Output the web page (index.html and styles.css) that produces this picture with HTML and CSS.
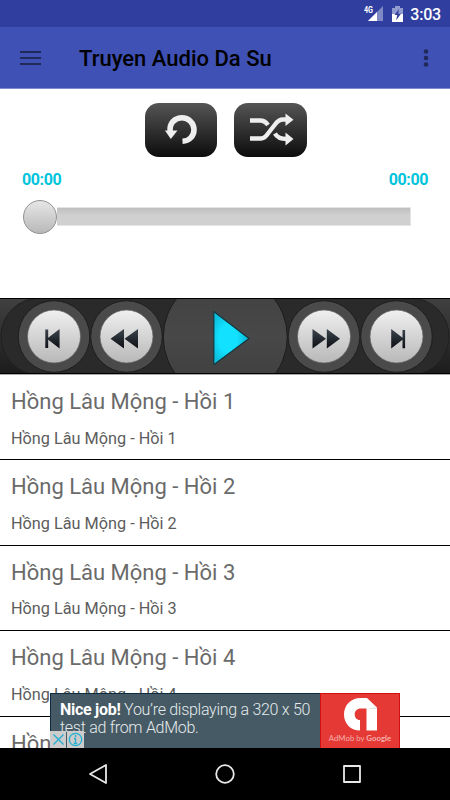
FILE: index.html
```html
<!DOCTYPE html>
<html lang="vi">
<head>
    <meta charset="UTF-8">
    <title>Truyen Audio Da Su</title>
    <link rel="stylesheet" href="styles.css">
</head>
<body>
    <div class="screen">
        <div class="statusbar">
            <svg class="signal" width="20" height="18" viewBox="0 0 20 18">
                <path d="M19 1v15H4z" fill="#7f89c6"/>
                <path d="M13 7v9H4z" fill="#fff"/>
                <text x="0" y="8" class="network" textLength="9" lengthAdjust="spacingAndGlyphs">4G</text>
            </svg>
            <svg class="battery" width="11" height="16" viewBox="0 0 11 16">
                <path d="M3 0h5v2h3v6H0V2h3z" fill="#929bd0"/>
                <path d="M0 8h11v8H0z" fill="#fff"/>
                <path d="M7 3L2.500 9h2.700l-1 5.200L9 7.800H6.200z" fill="#303f9f"/>
            </svg>
            <span class="clock">3:03</span>
        </div>

        <div class="toolbar">
            <svg class="menu" width="21" height="16" viewBox="0 0 21 16">
                <path d="M0 2h21M0 8h21M0 14h21" stroke="#202958" stroke-width="2"/>
            </svg>
            <h1>Truyen Audio Da Su</h1>
            <svg class="more" width="6" height="18" viewBox="0 0 6 18">
                <g fill="#202958"><circle cx="3" cy="2.500" r="2.300"/><circle cx="3" cy="9" r="2.300"/><circle cx="3" cy="15.500" r="2.300"/></g>
            </svg>
        </div>

        <div class="modes">
            <div class="mode">
                <svg width="72" height="54" viewBox="0 0 72 54">
                    <path d="M25.200 28.500C24 20 30 14.800 37 14.800c6.500 0 12 5 12 12 0 6.500-5 11.200-11.500 11.500" fill="none" stroke="#eee" stroke-width="5.600"/>
                    <path d="M20 27.500h12.500L25.800 36z" fill="#eee"/>
                </svg>
            </div>
            <div class="mode">
                <svg width="73" height="54" viewBox="0 0 73 54">
                    <g fill="none" stroke="#eee" stroke-width="4.300">
                        <path d="M16 35.500h11c3 0 5-2 7-5l7-9c2.500-3.500 4.500-5 8-5h4"/>
                        <path d="M16 17.500h10c4 0 6 1.500 8 4.500M41 30.500c2 4 5 5.500 12 5.500"/>
                    </g>
                    <path d="M51.500 10.500l8 6.300-8 6.200zM51.500 29.500l8 6.500-8 6.500z" fill="#eee"/>
                </svg>
            </div>
        </div>

        <div class="times">
            <span>00:00</span>
            <span>00:00</span>
        </div>

        <div class="seek">
            <div class="thumb"></div>
            <div class="track"></div>
        </div>

        <svg class="player" width="450" height="77" viewBox="0 0 450 77">
            <defs>
                <linearGradient id="edge" x1="0" y1="0" x2="0" y2="1">
                    <stop offset="0" stop-color="#414141"/><stop offset="1" stop-color="#1b1b1b"/>
                </linearGradient>
                <linearGradient id="mid" x1="0" y1="0" x2="0" y2="1">
                    <stop offset="0" stop-color="#404040"/><stop offset=".5" stop-color="#484848"/><stop offset="1" stop-color="#3c3c3c"/>
                </linearGradient>
                <linearGradient id="knob" x1="0" y1="0" x2="0" y2="1">
                    <stop offset="0" stop-color="#f0f0f0"/><stop offset="1" stop-color="#b8b8b8"/>
                </linearGradient>
                <linearGradient id="glyph" x1="0" y1="0" x2="0" y2="1">
                    <stop offset="0" stop-color="#3c444e"/><stop offset="1" stop-color="#0c0f13"/>
                </linearGradient>
                <radialGradient id="play" cx=".4">
                    <stop offset=".5" stop-color="#12e2ff"/><stop offset="1" stop-color="#0cc0de"/>
                </radialGradient>
            </defs>
            <rect width="450" height="77" fill="url(#edge)"/>
            <rect x="1" y="0" width="448" height="77" rx="38.500" fill="#2a2a2a" stroke="#202020"/>
            <circle cx="225.300" cy="39" r="62" fill="url(#mid)" stroke="#1c1c1c"/>
            <g fill="#4a4a4a" stroke="#1e1e1e">
                <circle cx="54" cy="38.500" r="35.800"/>
                <circle cx="126.500" cy="38.500" r="35.800"/>
                <circle cx="324" cy="38.500" r="35.800"/>
                <circle cx="396.500" cy="38.500" r="35.800"/>
            </g>
            <g fill="url(#knob)" stroke="#626262" stroke-width=".7">
                <circle cx="54" cy="38.500" r="26.500"/>
                <circle cx="126.500" cy="38.500" r="26.500"/>
                <circle cx="324" cy="38.500" r="26.500"/>
                <circle cx="396.500" cy="38.500" r="26.500"/>
            </g>
            <g fill="url(#glyph)">
                <path d="M45.300 31.500h2.900v8.200L59.600 31v19.500L48.200 41.800V50h-2.900z"/>
                <path d="M110.500 40.700L124 31v19.500zM124.500 40.700L138 31v19.500z"/>
                <path d="M312.500 31L326 40.700l-13.500 9.800zM326.800 31l13.200 9.700-13.200 9.800z"/>
                <path d="M391.200 31l11.300 8.700V32h2.600v18.200h-2.600v-8.500l-11.300 8.800z"/>
            </g>
            <path d="M213.800 13.500L249 40.500l-35.200 26.200z" fill="url(#play)" stroke="#17363f" stroke-width="1.200" stroke-linejoin="round"/>
            <path d="M0 .5h450M0 75.500h450" stroke="#000"/>
            <path d="M0 76.500h450" stroke="#aaa"/>
        </svg>

        <div class="content">
            <ul class="list">
                <li><div class="title">Hồng Lâu Mộng - Hồi 1</div><div class="subtitle">Hồng Lâu Mộng - Hồi 1</div></li>
                <li><div class="title">Hồng Lâu Mộng - Hồi 2</div><div class="subtitle">Hồng Lâu Mộng - Hồi 2</div></li>
                <li><div class="title">Hồng Lâu Mộng - Hồi 3</div><div class="subtitle">Hồng Lâu Mộng - Hồi 3</div></li>
                <li><div class="title">Hồng Lâu Mộng - Hồi 4</div><div class="subtitle">Hồng Lâu Mộng - Hồi 4</div></li>
                <li><div class="title">Hồng Lâu Mộng - Hồi 5</div></li>
            </ul>

            <div class="ad">
                <div class="ad-text"><b>Nice job!</b> You’re displaying a 320 x 50<br>test ad from AdMob.</div>
                <div class="ad-logo">
                    <svg width="34" height="34" viewBox="0 0 34 34">
                        <path d="M17 33.500C7 33.500 1 26 1 17.500 1 8 8 1 17.500 1H24l10 9.500v23H23.500V11.500H18c-4 0-6.300 2.500-6.300 5.700 0 3.500 2 5.600 5.300 5.800z" fill="#fff"/>
                        <path d="M23.500 11.500L34 10.500v1z" fill="#ccc"/>
                    </svg>
                    <div class="ad-brand">AdMob by <b>Google</b></div>
                </div>
                <div class="ad-choices">
                    <svg width="34" height="17" viewBox="0 0 34 17">
                        <path d="M0 0h16v17H0zM17 0h17v17H17z" fill="#ccc"/>
                        <g fill="none" stroke="#1fb0d2" stroke-width="1.300">
                            <path d="M3.500 3.500l10 10M13.500 3.500l-10 10"/>
                            <circle cx="25.500" cy="8.500" r="6.200"/>
                            <path d="M25.500 4v2M24 7.500h1.500v5M23.700 12.500h3.600"/>
                        </g>
                    </svg>
                </div>
            </div>
        </div>

        <div class="navbar">
            <svg width="20" height="22" viewBox="0 0 20 22"><path d="M18 2v18L2 11z"/></svg>
            <svg width="20" height="22" viewBox="0 0 20 22"><circle cx="10" cy="11" r="8.800"/></svg>
            <svg width="20" height="22" viewBox="0 0 20 22"><rect x="2" y="3" width="16" height="16"/></svg>
        </div>
    </div>
</body>
</html>
```

FILE: styles.css
```css
* {
    box-sizing: border-box;
}
body {
    margin: 0;
    font-family: Roboto, sans-serif;
    background-color: #fff;
}
svg {
    display: block;
    flex: none;
}
.screen {
    width: 450px;
    height: 800px;
    display: flex;
    flex-direction: column;
    overflow: hidden;
}
.statusbar {
    height: 27px;
    display: flex;
    justify-content: flex-end;
    align-items: center;
    padding: 1px 9px 0 0;
    background-color: #303f9f;
    color: #fff;
}
.network {
    font-size: 9px;
    font-weight: bold;
    fill: #fff;
}
.signal {
    margin-right: 8px;
}
.battery {
    margin-right: 7px;
}
.clock {
    font-size: 16px;
    font-weight: 500;
    letter-spacing: -0.2px;
}
.toolbar {
    height: 62px;
    display: flex;
    align-items: center;
    padding: 0 21px 0 20px;
    background-color: #3f51b5;
    border-bottom: 1px solid #7e8acb;
}
.toolbar h1 {
    flex: 1;
    margin: 2px 0 0 38px;
    font-size: 22px;
    font-weight: 500;
    color: #000;
}
.modes {
    display: flex;
    gap: 17px;
    padding: 14px 0 0 145px;
}
.mode {
    border-radius: 14px;
    background: linear-gradient(#555, #0c0c0c);
}
.times {
    display: flex;
    justify-content: space-between;
    padding: 13px 22px 0;
    font-size: 16px;
    line-height: 19px;
    font-weight: bold;
    letter-spacing: -0.4px;
    color: #00c4dc;
}
.seek {
    height: 109px;
    display: flex;
    align-items: flex-start;
    padding: 11px 39px 0 23px;
}
.thumb {
    width: 34px;
    height: 34px;
    border: 1.500px solid #929292;
    border-radius: 50%;
    background: linear-gradient(#e6e6e6, #b9b9b9);
}
.track {
    flex: 1;
    height: 19px;
    margin-top: 7px;
    border: 1px solid #e4e4e4;
    border-left: 0;
    background: linear-gradient(#bfbfbf, #d0d0d0 45%);
}
.content {
    position: relative;
    flex: 1;
    overflow: hidden;
}
.list {
    margin: 0;
    padding: 0;
    list-style: none;
}
.list li {
    height: 85.400px;
    padding: 12px 11px 0;
    border-bottom: 1px solid #000;
}
.title {
    font-size: 22px;
    line-height: 30px;
    color: #6a6a6a;
}
.subtitle {
    margin-top: 10.500px;
    font-size: 16.250px;
    line-height: 22px;
    color: #5c5c5c;
}
.ad {
    position: absolute;
    left: 50px;
    bottom: 0;
    width: 350px;
    height: 55px;
    display: flex;
    background-color: #455a64;
}
.ad-text {
    width: 270px;
    flex: none;
    padding: 7px 0 0 9px;
    border-top: 1px solid #0d2c41;
    border-left: 1px solid #0d2c41;
    font-size: 16px;
    line-height: 18px;
    font-weight: 300;
    letter-spacing: -0.28px;
    white-space: nowrap;
    color: #e6eaec;
}
.ad-text b {
    font-weight: 700;
    color: #fff;
}
.ad-logo {
    width: 80px;
    display: flex;
    flex-direction: column;
    align-items: center;
    padding-top: 3px;
    border: 1px solid #d30f10;
    border-bottom: 0;
    background-color: #e53935;
}
.ad-brand {
    margin-top: 2px;
    font-family: Lato, sans-serif;
    font-size: 7.800px;
    line-height: 11px;
    white-space: nowrap;
    color: #f5b0ae;
}
.ad-choices {
    position: absolute;
    left: 0;
    bottom: 0;
}
.navbar {
    height: 52px;
    display: flex;
    justify-content: center;
    align-items: center;
    gap: 107px;
    background-color: #000;
}
.navbar svg {
    fill: none;
    stroke: #e8e8e8;
    stroke-width: 1.800;
    stroke-linejoin: round;
}
```
